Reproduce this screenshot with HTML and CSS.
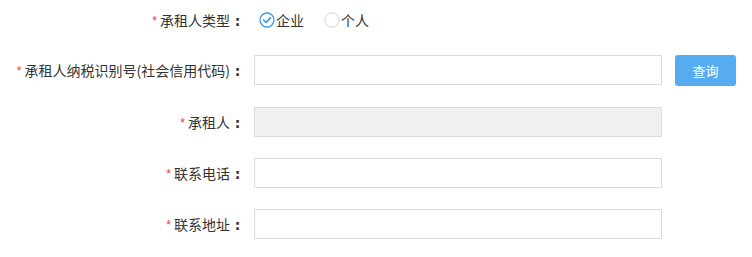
FILE: index.html
```html
<!DOCTYPE html>
<html lang="zh-CN">
<head>
<meta charset="utf-8">
<title>承租人信息</title>
<link rel="stylesheet" href="styles.css">
</head>
<body>
<form class="form">
  <div class="row row-first">
    <label class="label"><span class="req">*</span>承租人类型<span class="colon">:</span></label>
    <div class="radios">
      <span class="radio">
        <svg class="radio-icon" width="16" height="16" viewBox="0 0 16 16"><circle cx="8" cy="8" r="7" fill="none" stroke="#3a9be6" stroke-width="1.3"/><path d="M4.6 8.1 L7 10.5 L11.4 5.8" fill="none" stroke="#3a9be6" stroke-width="1.7" stroke-linecap="round" stroke-linejoin="round"/></svg>
        <span class="radio-text">企业</span>
      </span>
      <span class="radio">
        <svg class="radio-icon" width="16" height="16" viewBox="0 0 16 16"><circle cx="8" cy="8" r="7.2" fill="none" stroke="#d4d4d4" stroke-width="1"/></svg>
        <span class="radio-text">个人</span>
      </span>
    </div>
  </div>
  <div class="row row-query">
    <label class="label"><span class="req">*</span>承租人纳税识别号(社会信用代码)<span class="colon">:</span></label>
    <input class="input" type="text">
    <button class="btn" type="button">查询</button>
  </div>
  <div class="row">
    <label class="label"><span class="req">*</span>承租人<span class="colon">:</span></label>
    <input class="input input-disabled" type="text" disabled>
  </div>
  <div class="row">
    <label class="label"><span class="req">*</span>联系电话<span class="colon">:</span></label>
    <input class="input" type="text">
  </div>
  <div class="row">
    <label class="label"><span class="req">*</span>联系地址<span class="colon">:</span></label>
    <input class="input" type="text">
  </div>
</form>
</body>
</html>
```
FILE: styles.css
```css
html, body {
  margin: 0;
  padding: 0;
  background: #fff;
}
body {
  font-family: "Noto Sans CJK SC", "Noto Sans", sans-serif;
  font-size: 14px;
  color: #333;
}
.form {
  padding-top: 5px;
  display: flex;
  flex-direction: column;
  gap: 21px;
}
.row {
  display: flex;
  align-items: flex-start;
  height: 30px;
}
.row-first {
  margin-bottom: -1px;
  align-items: center;
}
.row-query {
  height: 31px;
}
.label {
  width: 244px;
  text-align: right;
  margin-right: 10px;
  line-height: 30px;
  white-space: nowrap;
  flex: none;
}
.colon {
  display: inline-block;
  width: 14px;
  text-align: center;
  font-family: "DejaVu Sans", sans-serif;
  font-weight: bold;
  font-size: 14px;
  padding-left: 1px;
  box-sizing: border-box;
}
.req {
  color: #e4393c;
  font-size: 12px;
  margin-right: 3px;
  font-family: "Liberation Sans", sans-serif;
  vertical-align: 1px;
}
.radios {
  display: flex;
  align-items: center;
  padding-left: 5px;
  gap: 20px;
}
.radio {
  display: flex;
  align-items: center;
  gap: 1px;
}
.radio-icon {
  display: block;
}
.radio-text {
  line-height: 20px;
}
.input {
  box-sizing: border-box;
  width: 408px;
  height: 30px;
  border: 1px solid #dcdcdc;
  background: #fff;
  margin: 0;
  padding: 0 8px;
  font: inherit;
  outline: none;
  flex: none;
}
.input-disabled {
  background: #f0f0f0;
}
.btn {
  margin-left: 13px;
  width: 61px;
  height: 31px;
  border: none;
  border-radius: 3px;
  background: #56acf0;
  color: #fff;
  font-family: inherit;
  font-size: 13px;
  padding: 0;
}
```
